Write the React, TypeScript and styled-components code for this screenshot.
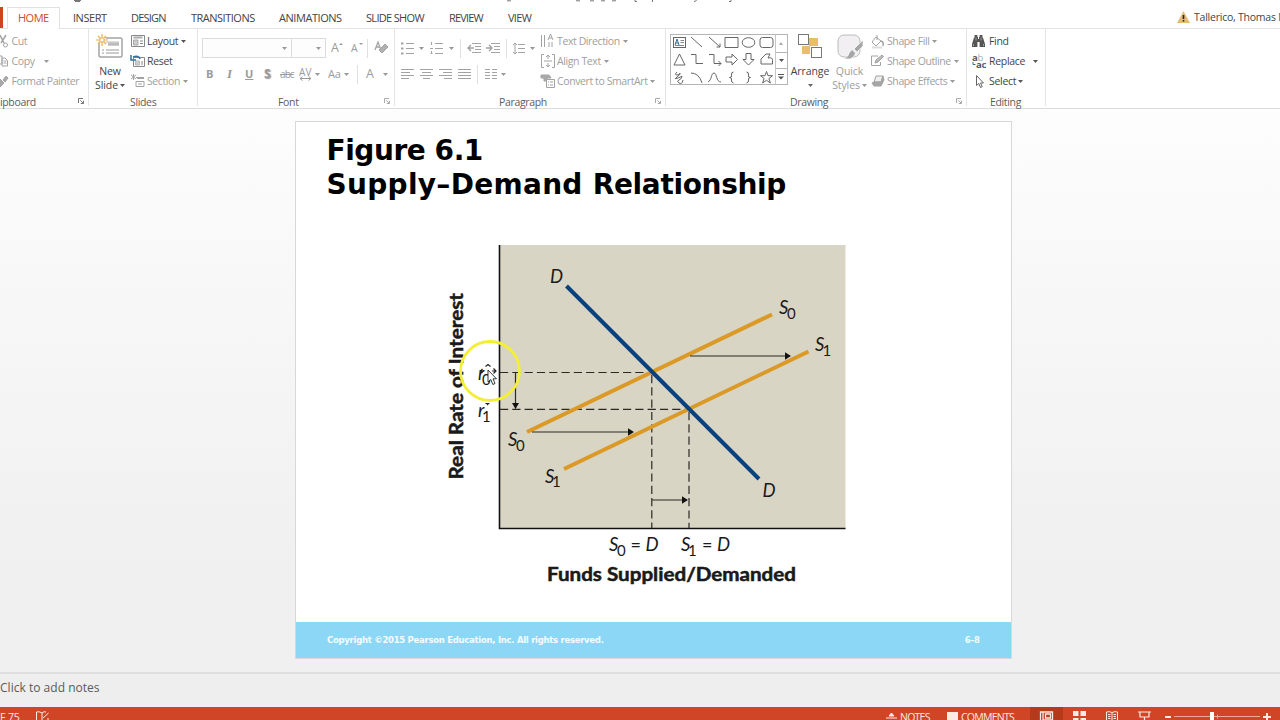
import React from "react";
import styled, { createGlobalStyle } from "styled-components";

const Global = createGlobalStyle`
  * { box-sizing: border-box; }
  body { margin: 0; overflow: hidden; font-family: "Open Sans", "Noto Sans", sans-serif; }
  svg { display: block; flex: none; overflow: visible; }
`;

const Page = styled.div`
  width: 1280px; height: 720px; overflow: hidden; background: #fff;
  display: flex; flex-direction: column; position: relative;
`;
const TitleStrip = styled.div`height: 7px; flex: none;`;
const TabBar = styled.nav`
  height: 21px; flex: none; display: flex; white-space: nowrap;
`;
const FileTab = styled.div`width: 3px; margin-right: 4px; background: #cf4224;`;
const Tab = styled.div<{ $w: number; $active?: boolean; $ls?: number }>`
  width: ${p => p.$w}px; height: ${p => (p.$active ? 22 : 20)}px; padding-left: ${p => (p.$active ? 10 : 0)}px;
  margin-right: ${p => (p.$active ? 12 : 0)}px; flex: none;
  border: 1px solid ${p => (p.$active ? "#e1e1e1" : "transparent")}; border-bottom: 0;
  background: ${p => (p.$active ? "#fff" : "none")}; color: ${p => (p.$active ? "#cb4a2c" : "#444")};
  font-size: 11px; line-height: 19px; letter-spacing: ${p => p.$ls ?? -0.45}px; z-index: 1;
`;
const Account = styled.div`
  margin-left: auto; width: 103px; display: flex; gap: 4px; align-items: center; height: 20px;
  font-size: 10.5px; color: #444; letter-spacing: -0.23px;
`;
const Ribbon = styled.section`
  height: 81px; flex: none; display: flex; border-top: 1px solid #e3e3e3; border-bottom: 1px solid #dcdcdc;
`;
const Group = styled.div<{ $w: number }>`
  width: ${p => p.$w}px; flex: none; position: relative; display: flex; flex-direction: column; padding-top: 2px;
  border-right: 1px solid #e4e4e4; margin-bottom: 2px;
`;
const GroupBody = styled.div`height: 62px; flex: none; display: flex;`;
const GroupName = styled.div<{ $pad: number }>`
  height: 13px; line-height: 18px; padding-left: ${p => p.$pad}px; font-size: 10.5px; letter-spacing: -0.35px;
  color: #5c5c5c; white-space: nowrap;
`;
const Launcher = styled.span`position: absolute; right: 4px; bottom: 2px;`;
const Column = styled.div<{ $w?: number; $pad?: number }>`
  display: flex; flex-direction: column; flex: none; width: ${p => (p.$w ? p.$w + "px" : "auto")};
  padding-left: ${p => p.$pad ?? 0}px;
`;
const Command = styled.div<{ $off?: boolean }>`
  height: 20px; display: flex; align-items: center; white-space: nowrap; font-size: 10.5px;
  letter-spacing: ${p => (p.$off ? -0.4 : -0.3)}px; color: ${p => (p.$off ? "#a0a0a0" : "#444")};
`;
const IconSlot = styled.span<{ $w?: number }>`width: ${p => p.$w ?? 16}px; flex: none;`;
const CaretSlot = styled.span<{ $gap?: number }>`margin-left: ${p => p.$gap ?? 3}px;`;
const ToolRow = styled.div<{ $top: number }>`
  height: 20px; margin-top: ${p => p.$top}px; display: flex; align-items: center;
`;
const Tool = styled.span<{ $w: number }>`
  width: ${p => p.$w}px; flex: none; display: flex; align-items: center; color: #9b9b9b;
  font-size: 12.5px; line-height: 20px; white-space: nowrap;
`;
const SmallA = styled.span`font-size: 10.5px;`;
const Case = styled.span`font-size: 11px; letter-spacing: -0.2px;`;
const Bold = styled.b`font-size: 11px;`;
const Italic = styled.i`font-family: "Liberation Serif", serif; font-weight: bold; font-size: 13px;`;
const Under = styled.b`text-decoration: underline; font-size: 11px;`;
const Shadow = styled.b`text-shadow: 1px 1px 1px #999; font-size: 12px;`;
const Strike = styled.s`font-size: 10px; letter-spacing: -0.9px;`;
const Rule = styled.span`width: 1px; height: 19px; background: #e0e0e0;`;
const Combo = styled.div<{ $w: number }>`
  width: ${p => p.$w}px; height: 20px; border: 1px solid #dcdcdc; margin-right: -1px; background: #fdfdfd;
  display: flex; align-items: center; justify-content: flex-end; padding-right: 4px; flex: none;
`;
const BigButton = styled.div<{ $w: number; $off?: boolean }>`
  width: ${p => p.$w}px; display: flex; flex-direction: column; align-items: center; flex: none;
  font-size: 10.5px; line-height: 13px; color: ${p => (p.$off ? "#9d9d9d" : "#444")}; letter-spacing: -0.1px;
`;
const BigIcon = styled.div`height: 34px; padding-top: 3px;`;
const BigLine = styled.div`height: 13.5px; display: flex; align-items: center; white-space: nowrap;`;
const Gallery = styled.div`
  width: 118px; height: 51px; margin: 3px 0 0 4px; border: 1px solid #b5b5b5; display: flex; flex: none;
`;
const Shapes = styled.div`
  width: 104px; display: grid; grid-template-columns: repeat(6, 17.3px); grid-template-rows: repeat(3, 17.3px);
  place-items: center; margin-top: -1px;
`;
const Scroller = styled.div`
  width: 13px; display: grid; grid-template-rows: 17px 16px 16px; border-left: 1px solid #c6c6c6;
  & > span { display: flex; align-items: center; justify-content: center; }
  & > span + span { border-top: 1px solid #b5b5b5; }
`;
const Workspace = styled.main`
  height: 563px; flex: none; padding-top: 12px; padding-left: 295px;
  background: linear-gradient(#fdfdfd, #f7f7f7 35%, #f0f0f0 80%);
`;
const Slide = styled.article`
  width: 717px; height: 538px; border: 1px solid #d8d8d8; background: #fff;
  display: flex; flex-direction: column;
`;
const SlideTitle = styled.h1`
  margin: 0; padding: 12px 0 0 30.5px; height: 113px; font: bold 28px/34px "DejaVu Sans", sans-serif;
  color: #000; white-space: nowrap;
`;
const FigureNumber = styled.span`display: block; letter-spacing: -0.45px;`;
const Tracked = styled.span<{ $ls: number }>`letter-spacing: ${p => p.$ls}px;`;
const ChartArea = styled.div`height: 387px;`;
const SlideFooter = styled.footer`
  flex: 1; background: #8dd7f6; display: flex; justify-content: space-between; align-items: center;
  padding: 0 31px 1px 31px; font: bold 8.5px "DejaVu Sans", sans-serif; letter-spacing: -0.28px; color: #f4fcff;
`;
const Notes = styled.div`
  height: 35px; flex: none; border-top: 2px solid #dfdfdf; background: #eee; color: #5b5b5b;
  font-size: 12px; line-height: 27px; letter-spacing: 0.02px;
`;
const StatusBar = styled.div`
  height: 20px; flex: none; background: #d04526; display: flex; align-items: center; color: #fde9e3;
  font-size: 10.5px; letter-spacing: -0.75px; white-space: nowrap;
`;
const PageCount = styled.span`letter-spacing: -0.1px;`;
const StatusItem = styled.div<{ $w: number; $dark?: boolean; $pad?: number }>`
  width: ${p => p.$w}px; height: 20px; flex: none; display: flex; align-items: center;
  padding-left: ${p => p.$pad ?? 0}px; background: ${p => (p.$dark ? "#b5391b" : "none")};
`;
const Overlay = styled.div<{ $x: number; $y: number }>`
  position: absolute; left: ${p => p.$x}px; top: ${p => p.$y}px;
`;

const Caret = ({ c = "#999" }: { c?: string }) => (
  <svg width="5" height="3" viewBox="0 0 5 3"><path d="M0 0h5L2.5 3z" fill={c} /></svg>
);
const CornerIcon = ({ c = "#aaa" }: { c?: string }) => (
  <svg width="6" height="6" viewBox="0 0 6 6" fill="none" stroke={c}><path d="M.5 5V.5H5M2.3 2.3l3 3M5.5 2.8v2.7H2.8" /></svg>
);

type IconProps = { children: React.ReactNode; w?: number; h?: number; c?: string };
const Icon = ({ children, w = 14, h = 14, c = "#a3a3a3" }: IconProps) => (
  <svg width={w} height={h} viewBox={`0 0 ${w} ${h}`} fill="none" stroke={c}>{children}</svg>
);

const Binoculars = () => (
  <Icon w={13} h={12} c="none"><g fill="#555">
    <path d="M2.6 0h2.8v2H6v2h1V2h.6V0h2.8v2l.8 1.2L13 9v3H7.600V7H5.400v5H0V9l1.800-5.800L2.600 2z" /></g>
    <path d="M1.500 9v2M11.500 9v2M4 2.500v3M9 2.500v3" stroke="#bbb" strokeWidth=".7" />
  </Icon>
);

const Lines = ({ rows }: { rows: [number, number][] }) => (
  <Icon w={13} h={11}>{rows.map(([a, b], i) => <path key={i} d={`M${a} ${i * 3 + 0.5}H${b}`} />)}</Icon>
);

const shapePaths = [
  "box", "M1 1l11 10", "M1 1l11 10M12 7.500v3.500H8.500", "M0 1.500h13v10H0z", "oval", "round",
  "M6.500 1L12 12H1z", "M1 1.500h5v9h7", "M1 1.500h5v9h7M10.500 8l2.500 2.500L10.500 13", "M1 4h6V1l5.500 5.500L7 12V9H1z",
  "M4 .5h5v6h3L6.500 12 1 6.500h3z", "M6 1H10L8 5q5-1 4.500 2.500V11H1V6z",
  "M4 1Q1 4 4 4T7 2Q8 3 4 6T5 7T9 5Q9 8 6 9T6 12T10 9", "M1 2Q9 2 12 12", "M0 11C4 9 3 2 6 2S8 11 13 11",
  "M8.500 1Q6 1 6.500 4T4.500 6.500Q7 6.500 6.500 9T8.500 12", "M4.500 1Q7 1 6.500 4T8.500 6.500Q6 6.500 6.500 9T4.500 12",
  "M6.500 .5l1.500 4.200h4.500L8.900 7.500l1.500 4.500-3.900-2.700L2.600 12l1.500-4.500L.5 4.700H5z",
];
const ShapeIcon = ({ d }: { d: string }) => (
  <Icon w={13} h={13} c="#666">
    {d === "box" ? <g><rect x=".5" y="1.500" width="12" height="10" /><path d="M2 9l2-6 2 6M2.800 7h2.500" stroke="#38708f" /><path d="M7.500 4.500h3.500M7.500 6.500h3.500M2 9.500h9" stroke="#888" /></g>
      : d === "oval" ? <ellipse cx="6.500" cy="6.500" rx="6.300" ry="4.800" />
      : d === "round" ? <rect x="0" y="1.500" width="13" height="10" rx="2.500" /> : <path d={d} />}
  </Icon>
);

const NewSlideIcon = () => (
  <Icon w={26} h={24} c="#777">
    <rect x="2" y="4" width="23" height="19" rx="1" fill="#fff" />
    <path d="M6 8h16M11 11h11" stroke="#bbb" /><path d="M11 8.500h11v3H11z" fill="#bbb" stroke="none" />
    <path d="M5 16h2M9 16h13M5 19h2M9 19h13" stroke="#999" />
    <circle cx="5" cy="6" r="4" fill="#fff" stroke="none" />
    <path d="M5 0v12M-1 6h12M1 2l8 8M9 2l-8 8" stroke="#e9ae4e" strokeWidth="1.200" />
    <circle cx="5" cy="6" r="2.200" fill="#fff" stroke="#e9ae4e" />
  </Icon>
);
const ArrangeIcon = () => (
  <Icon w={24} h={24} c="#777">
    <path d="M11 4h9v8h-9zM4 12h8v8H4z" fill="#e8bd6c" stroke="none" />
    <rect x=".5" y=".5" width="10" height="10" fill="#fff" /><rect x="13.500" y="13.500" width="10" height="10" fill="#fff" />
  </Icon>
);
const QuickIcon = () => (
  <Icon w={26} h={26} c="#bbb">
    <rect x="1" y="1" width="22" height="22" rx="6" fill="#f1eff2" />
    <path d="M26 6v6l-6 6-3-3z" fill="#a6a6a6" stroke="#fff" strokeWidth=".7" />
    <path d="M15 15.500l3.500 3.500q-1 5-6 6H7q5-3 5-6z" fill="#a6a6a6" stroke="#fff" strokeWidth=".7" />
  </Icon>
);

const Chart = () => (
  <svg width="715" height="387" viewBox="296 235 715 387" fontFamily='"Lato", sans-serif' fill="#1a1a1a">
    <rect x="499" y="245" width="346.500" height="283.500" fill="#d9d5c5" />
    <path d="M499.500 245V528.500H845.500" fill="none" stroke="#111" strokeWidth="1.600" />
    <g stroke="#2b2823" strokeWidth="1.200" strokeDasharray="8.200 4.100" fill="none">
      <path d="M500 372.500H652" /><path d="M500 409.300H689" /><path d="M651.800 375V528" /><path d="M689 412V528" />
    </g>
    <g stroke="#db9925" strokeWidth="4"><path d="M527 432L772 314.500" /><path d="M564 469L808.500 351.500" /></g>
    <path d="M566.500 286L759 479" stroke="#08417f" strokeWidth="4" />
    <g stroke="#2b2823" strokeWidth="1.200"><path d="M690 356H787M532 432H629M652 500H684M515.500 372V404" /></g>
    <g fill="#111"><path d="M791 356l-6-3.800v7.600zM634 432l-6-3.800v7.600zM688 500l-6-3.800v7.600zM515.500 409l-3.500-6h7z" /></g>
    <g fontStyle="italic" fontSize="18.500">
      <text x="550" y="282.500">D</text><text x="762.500" y="496.500">D</text>
      <text x="779" y="313.500">S</text><text x="815" y="350.500">S</text>
      <text x="508" y="445.500">S</text><text x="545" y="482.500">S</text>
      <text x="478" y="380">r</text><text x="478" y="417">r</text>
      <text x="609" y="551">S</text><text x="645.500" y="551">D</text><text x="681" y="551">S</text><text x="717" y="551">D</text>
    </g>
    <g fontSize="18"><text x="630.500" y="551">=</text><text x="702" y="551">=</text></g>
    <g fontSize="15">
      <text x="787" y="318.500">0</text><text x="822.500" y="355.500">1</text><text x="516" y="450.500">0</text><text x="552" y="487">1</text>
      <text x="482" y="384.500">0</text><text x="482" y="421.500">1</text><text x="617" y="556">0</text><text x="688" y="556">1</text>
    </g>
    <g fontWeight="bold" fontSize="18" stroke="#1a1a1a" strokeWidth=".5">
      <text x="547" y="581" textLength="249" lengthAdjust="spacingAndGlyphs">Funds Supplied/Demanded</text>
      <text transform="translate(462.500 479.500) rotate(-90)" textLength="186.500" lengthAdjust="spacingAndGlyphs">Real Rate of Interest</text>
    </g>
  </svg>
);

export default function App() {
  return (
    <Page>
      <Global />
      <TitleStrip>
        <svg width="1280" height="7" stroke="#777" fill="none">
          <path d="M74 .5h7M75 1.500h5M507 .8h4M576 .8h4M590 .8h4M601 .8h4M612 .8h4M635 0v1.500h2M652.500 0v2M694 1.500q2 0 2.500-1.500M729 1.500h2V0" />
        </svg>
      </TitleStrip>
      <TabBar>
        <FileTab />
        <Tab $w={53} $active $ls={-0.5}>HOME</Tab>
        <Tab $w={58}>INSERT</Tab>
        <Tab $w={60} $ls={-0.8}>DESIGN</Tab>
        <Tab $w={88} $ls={-0.5}>TRANSITIONS</Tab>
        <Tab $w={87}>ANIMATIONS</Tab>
        <Tab $w={83} $ls={-0.68}>SLIDE SHOW</Tab>
        <Tab $w={59} $ls={-0.85}>REVIEW</Tab>
        <Tab $w={40} $ls={-0.7}>VIEW</Tab>
        <Account>
          <svg width="13" height="12" viewBox="0 0 13 12"><path d="M6.500 0L13 12H0z" fill="#e6bc72" /><path d="M6.500 4v4M6.500 9v1.500" stroke="#222" strokeWidth="1.600" /></svg>
          <span>Tallerico, Thomas M</span>
        </Account>
      </TabBar>
      <Ribbon>
        <Group $w={89}>
          <GroupBody>
            <Column>
              <Command $off><IconSlot $w={11.5}><Icon w={8} h={13}><path d="M0 0l4 8M6 0L1 8" strokeWidth="1.500" /><circle cx="5.500" cy="10" r="2" /></Icon></IconSlot>Cut</Command>
              <Command $off><IconSlot $w={11.5}><Icon w={8} h={12}><path d="M0 1h2v8H0M2 3h3l2.500 2.500V11H2zM3.500 6h3M3.500 8h3" /></Icon></IconSlot>Copy<CaretSlot $gap={9}><Caret /></CaretSlot></Command>
              <Command $off><IconSlot $w={11.5}><Icon w={9} h={12}><path d="M0 4l4 4-4 4zM3 5l2 2 3-4-2-2z" fill="#aaa" /></Icon></IconSlot>Format Painter</Command>
            </Column>
          </GroupBody>
          <GroupName $pad={0}>ipboard</GroupName>
          <Launcher><CornerIcon c="#777" /></Launcher>
        </Group>
        <Group $w={109}>
          <GroupBody>
            <BigButton $w={42}>
              <BigIcon><NewSlideIcon /></BigIcon>
              <BigLine>New</BigLine>
              <BigLine>Slide<CaretSlot $gap={2}><Caret c="#555" /></CaretSlot></BigLine>
            </BigButton>
            <Column>
              <Command><IconSlot><Icon c="#888"><path d="M.5 1.500h13v11H.5z" /><path d="M2.500 3.500h9" strokeWidth="2" stroke="#aaa" /><path d="M2.500 6h4.500v5H2.500z" fill="#ccc" stroke="#aaa" /><path d="M9 7h3M9 9.500h3" /></Icon></IconSlot>Layout<CaretSlot><Caret c="#555" /></CaretSlot></Command>
              <Command><IconSlot><Icon c="#888"><path d="M2.500 3.500h11v9h-11z" /><path d="M4.500 7h4v4h-4z" fill="#ccc" stroke="#bbb" /><path d="M10 8h2M10 10h2" /><path d="M9 5Q8 1 2 3M0 1v5h5" stroke="#35719c" strokeWidth="1.500" /></Icon></IconSlot>Reset</Command>
              <Command $off><IconSlot><Icon><path d="M5 3.500h8M5 7.500h8v5H5zM7 10h4M2.500 0v6M0 1l5 4M5 1L0 5" /><path d="M6 4h7" strokeWidth="2" /></Icon></IconSlot>Section<CaretSlot><Caret /></CaretSlot></Command>
            </Column>
          </GroupBody>
          <GroupName $pad={41}>Slides</GroupName>
        </Group>
        <Group $w={197}>
          <GroupBody>
            <Column $pad={4}>
              <ToolRow $top={7}>
                <Combo $w={90}><Caret /></Combo><Combo $w={35}><Caret /></Combo>
                <Tool $w={6} />
                <Tool $w={20}>A<Icon w={5} h={12}><path d="M0 3h4L2 1z" fill="#999" stroke="none" /></Icon></Tool>
                <Tool $w={16}><SmallA>A</SmallA><Icon w={5} h={12}><path d="M1 1h4L3 3z" fill="#999" stroke="none" /></Icon></Tool>
                <Tool $w={8}><Rule /></Tool>
                <Icon w={13} h={14}><path d="M0 9l3-8 3 8M1.500 6h3" strokeWidth="1.300" /><path d="M4 9l6-6 3 3-6 6z" fill="#b0b0b0" /></Icon>
              </ToolRow>
              <ToolRow $top={6}>
                <Tool $w={4} />
                <Tool $w={21}><Bold>B</Bold></Tool>
                <Tool $w={18}><Italic>I</Italic></Tool>
                <Tool $w={19}><Under>U</Under></Tool>
                <Tool $w={16}><Shadow>S</Shadow></Tool>
                <Tool $w={19}><Strike>abc</Strike></Tool>
                <Tool $w={16}><svg width="14" height="14" fill="#999"><text x="0" y="8.500" fontSize="10" textLength="12.500">AV</text><path d="M1 11.500h11M3.500 9.500l-2.500 2 2.500 2M9.500 9.500l2.500 2-2.500 2" fill="none" stroke="#999" /></svg></Tool>
                <Tool $w={13}><Caret /></Tool>
                <Tool $w={16}><Case>Aa</Case></Tool>
                <Tool $w={13}><Caret /></Tool>
                <Tool $w={9}><Rule /></Tool>
                <Tool $w={17}>A</Tool>
                <Caret />
              </ToolRow>
            </Column>
          </GroupBody>
          <GroupName $pad={80}>Font</GroupName>
          <Launcher><CornerIcon /></Launcher>
        </Group>
        <Group $w={271}>
          <GroupBody>
            <Column $w={146} $pad={6}>
              <ToolRow $top={7}>
                <Tool $w={18}><Icon w={13} h={12}><path d="M5 1.500h8M5 6.500h8M5 11.500h8" /><path d="M0 1.500h2.500M0 6.500h2.500M0 11.500h2.500" strokeWidth="2" /></Icon></Tool>
                <Tool $w={11}><Caret /></Tool>
                <Tool $w={19}><Icon w={13} h={12}><path d="M5 1.500h8M5 6.500h8M5 11.500h8M1.500 0v3M0 6.500h3M1.500 9v3M.5 11.500h2" /></Icon></Tool>
                <Tool $w={11}><Caret /></Tool>
                <Tool $w={7}><Rule /></Tool>
                <Tool $w={19}><Icon w={14} h={10}><path d="M5 .5h9M8 3.500h6M8 6.500h6M5 9.500h9" /><path d="M1 5h6M4 2L1 5l3 3" strokeWidth="1.400" /></Icon></Tool>
                <Tool $w={20}><Icon w={14} h={10}><path d="M5 .5h9M8 3.500h6M8 6.500h6M5 9.500h9" /><path d="M0 5h6M3 2l3 3-3 3" strokeWidth="1.400" /></Icon></Tool>
                <Tool $w={7}><Rule /></Tool>
                <Tool $w={17}><Icon w={12} h={13}><path d="M5 2.500h7M5 6.500h7M5 10.500h7M2 1v11M0 3l2-2 2 2M0 10l2 2 2-2" /></Icon></Tool>
                <Caret />
              </ToolRow>
              <ToolRow $top={6}>
                <Tool $w={19}><Lines rows={[[0, 13], [0, 9], [0, 13], [0, 8]]} /></Tool>
                <Tool $w={19}><Lines rows={[[0, 13], [2, 11], [0, 13], [3, 10]]} /></Tool>
                <Tool $w={19}><Lines rows={[[0, 13], [4, 13], [0, 13], [5, 13]]} /></Tool>
                <Tool $w={19}><Lines rows={[[0, 13], [0, 13], [0, 13], [0, 13]]} /></Tool>
                <Tool $w={8}><Rule /></Tool>
                <Tool $w={16}><Icon w={12} h={11}><path d="M0 .5h5M7 .5h5M0 3.500h5M7 3.500h5M0 6.500h5M7 6.500h5M0 9.500h5M7 9.500h5" /></Icon></Tool>
                <Caret />
              </ToolRow>
            </Column>
            <Column>
              <Command $off><IconSlot><Icon><path d="M.5 1v12M3.500 1v12M7 6l2.500-6L12 6M8 4h3M8 13V8M11 13V8" /></Icon></IconSlot>Text Direction<CaretSlot><Caret /></CaretSlot></Command>
              <Command $off><IconSlot><Icon><path d="M3 .5H.5v13H3M11 .5h2.500v13H11M3 7h8M7 1v4M5 3l2-2 2 2M7 9v4M5 11l2 2 2-2" /></Icon></IconSlot>Align Text<CaretSlot><Caret /></CaretSlot></Command>
              <Command $off><IconSlot><Icon><path d="M0 1h8l2 3H6v3H3V4H0z" fill="#aaa" /><path d="M5.500 5.500h8v8h-8z" fill="#fff" /><path d="M7 8h1M9 8h3M7 11h1M9 11h3" /></Icon></IconSlot>Convert to SmartArt<CaretSlot><Caret /></CaretSlot></Command>
            </Column>
          </GroupBody>
          <GroupName $pad={104}>Paragraph</GroupName>
          <Launcher><CornerIcon /></Launcher>
        </Group>
        <Group $w={301}>
          <GroupBody>
            <Gallery>
              <Shapes>{shapePaths.map((d, i) => <ShapeIcon key={i} d={d} />)}</Shapes>
              <Scroller>
                <span><svg width="4" height="3"><path d="M0 3h4L2 0z" fill="#aaa" /></svg></span>
                <span><Caret c="#555" /></span>
                <span><svg width="6" height="6"><path d="M0 .5h6" stroke="#555" /><path d="M0 2.500h6l-3 3z" fill="#555" /></svg></span>
              </Scroller>
            </Gallery>
            <BigButton $w={44}>
              <BigIcon><ArrangeIcon /></BigIcon>
              <BigLine>Arrange</BigLine>
              <BigLine><Caret c="#666" /></BigLine>
            </BigButton>
            <BigButton $w={35} $off>
              <BigIcon><QuickIcon /></BigIcon>
              <BigLine>Quick</BigLine>
              <BigLine>Styles<CaretSlot $gap={2}><Caret /></CaretSlot></BigLine>
            </BigButton>
            <Column $pad={4}>
              <Command $off><IconSlot><Icon w={13} h={13}><path d="M5 2l5 4-5 5-4-4zM6 0v5" /><path d="M10 6q3 1 2 5" strokeWidth="1.500" /><path d="M1 12.500h10" stroke="#ddd" strokeWidth="2" /></Icon></IconSlot>Shape Fill<CaretSlot><Caret /></CaretSlot></Command>
              <Command $off><IconSlot><Icon w={13} h={12}><path d="M7 1H.5v9.500h9V7" /><path d="M4 8l1-3 6-5 1.500 1.500L7 7z" fill="#bbb" /></Icon></IconSlot>Shape Outline<CaretSlot><Caret /></CaretSlot></Command>
              <Command $off><IconSlot><Icon w={13} h={12}><path d="M3 7l2-6h7l-2 6z" fill="#eee" /><path d="M1 8l2-1h7l2-6 1 4-3 6H3z" fill="#a5a5a5" /></Icon></IconSlot>Shape Effects<CaretSlot><Caret /></CaretSlot></Command>
            </Column>
          </GroupBody>
          <GroupName $pad={124}>Drawing</GroupName>
          <Launcher><CornerIcon /></Launcher>
        </Group>
        <Group $w={79}>
          <GroupBody>
            <Column $pad={5}>
              <Command><IconSlot $w={17}><Binoculars /></IconSlot>Find</Command>
              <Command><IconSlot $w={17}><svg width="14" height="14" fontSize="9.500" fontWeight="bold" fill="#555"><text x="0" y="6.500">a<tspan fill="#aaa" fontWeight="400">b</tspan></text><text x="4" y="13.500">a<tspan fill="#38708f">c</tspan></text><path d="M1 8v2.500h2.500" fill="none" stroke="#38708f" /></svg></IconSlot>Replace<CaretSlot $gap={8}><Caret c="#555" /></CaretSlot></Command>
              <Command><IconSlot $w={17}><Icon w={12} h={13} c="#666"><path d="M4.500 .5v10l2.300-2 1.700 4 1.700-.8-1.700-3.700h3z" /></Icon></IconSlot>Select<CaretSlot $gap={2}><Caret c="#555" /></CaretSlot></Command>
            </Column>
          </GroupBody>
          <GroupName $pad={23}>Editing</GroupName>
        </Group>
      </Ribbon>
      <Workspace>
        <Slide>
          <SlideTitle>
            <FigureNumber>Figure 6.1</FigureNumber>
            <Tracked $ls={0.3}>Supply–Demand </Tracked><Tracked $ls={-0.35}>Relationship</Tracked>
          </SlideTitle>
          <ChartArea><Chart /></ChartArea>
          <SlideFooter><span>Copyright ©2015 Pearson Education, Inc. All rights reserved.</span><Tracked $ls={0}>6-8</Tracked></SlideFooter>
        </Slide>
      </Workspace>
      <Notes>Click to add notes</Notes>
      <StatusBar>
        <StatusItem $w={36}><PageCount>F 75</PageCount></StatusItem>
        <StatusItem $w={850}><Icon w={14} h={12} c="#fde9e3"><path d="M6 2Q3 0 .5 1v9.500q3-1 5.500 1V2Q8 0 10 1M6 11.500q3-2 6-1V7M7 7l5.500-5" /></Icon></StatusItem>
        <StatusItem $w={61}><IconSlot $w={14}><Icon w={11} h={10} c="#fde9e3"><path d="M3 4h5L5.500 1z" fill="#fde9e3" /><path d="M0 6h11M0 9h11" /></Icon></IconSlot>NOTES</StatusItem>
        <StatusItem $w={83}><IconSlot $w={14}><Icon w={11} h={11} c="none"><path d="M0 0h11v8H7l-2 3V8H0z" fill="#fde9e3" /></Icon></IconSlot>COMMENTS</StatusItem>
        <StatusItem $w={33} $dark $pad={10}><Icon w={13} h={12} c="#fde9e3"><path d="M.5 1h12v10H.5zM3 1v10M5.500 3h5v4h-5zM3 9h9" strokeWidth="1.300" /></Icon></StatusItem>
        <StatusItem $w={43} $pad={10}><Icon w={13} h={12} c="none"><path d="M0 0h5.500v5H0zM7.500 0H13v5H7.500zM0 7h5.500v5H0zM7.500 7H13v5H7.500z" fill="#fde9e3" /></Icon></StatusItem>
        <StatusItem $w={32}><Icon w={12} h={12} c="#fde9e3"><path d="M6 1.500Q3 0 .5 1v9.500q3-.5 5.500 1 2.500-1.500 5.500-1V1Q9 0 6 1.500v10M2 3.500h2.500M2 5.500h2.500M2 7.500h2.500M7.500 3.500H10M7.500 5.500H10M7.500 7.500H10" /></Icon></StatusItem>
        <StatusItem $w={27}><Icon w={13} h={12} c="#fde9e3"><path d="M0 1h13M2 1v5h9V1M6.500 6v4M4 10.500h5" strokeWidth="1.200" /></Icon></StatusItem>
        <StatusItem $w={115}><Icon w={110} h={12} c="#fde9e3"><path d="M0 6h6M98 6h8M102 2v8" strokeWidth="2" /><path d="M9 5.500h86M52.500 3.500v4" stroke="#eda896" /><path d="M45 1h4v10h-4z" fill="#fff" stroke="none" /></Icon></StatusItem>
      </StatusBar>
      <Overlay $x={459} $y={340}>
        <svg width="62" height="62" viewBox="0 0 62 62" fill="none">
          <circle cx="31" cy="31" r="29.500" stroke="#f4ef35" strokeWidth="2.800" />
          <path d="M29 30v12l2.800-2.500 2 5 2.200-1-2-4.700h3.500z" fill="#fff" stroke="#222" strokeWidth=".9" />
          <path d="M26.500 26.500l2.500-2 2.500 2M23.500 29l-2 2 2 2M34.500 28.500l2.500 2.500-2.500 2.500M21 31h4M33 31h4M26.500 63.500h3l-1.500 1.500" stroke="#222" strokeWidth="1.200" />
        </svg>
      </Overlay>
    </Page>
  );
}
